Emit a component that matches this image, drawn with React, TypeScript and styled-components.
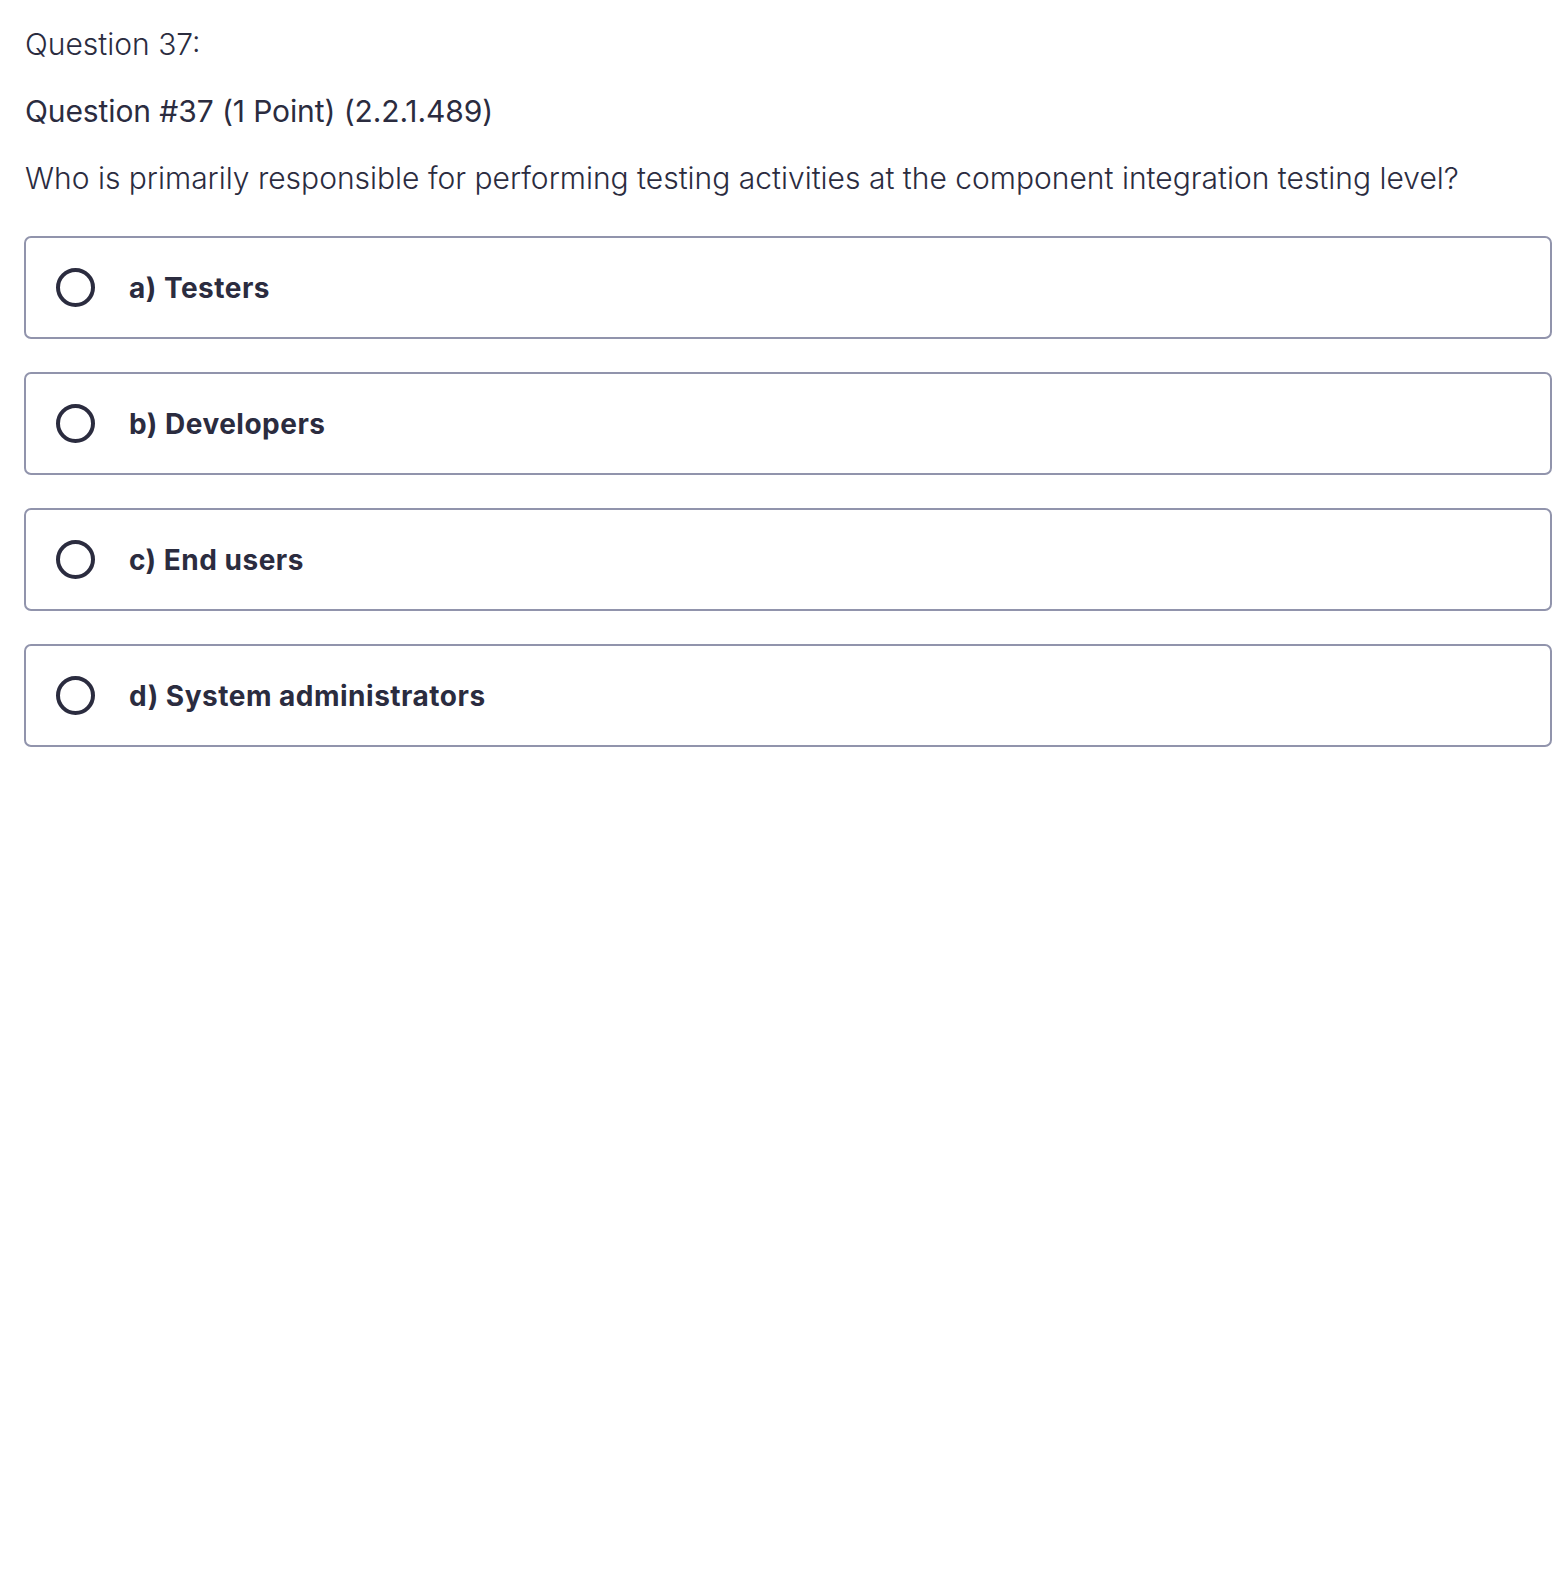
import React from 'react';
import styled, { createGlobalStyle } from 'styled-components';

const OPTIONS = ['a) Testers', 'b) Developers', 'c) End users', 'd) System administrators'];

const GlobalStyle = createGlobalStyle`
  html, body { margin: 0; padding: 0; background: #fff; }
  * { box-sizing: border-box; }
`;

const App = () => {
  return (
    <Page>
      <GlobalStyle />
      <Heading>Question 37:</Heading>
      <SubHeading>Question #37 (1 Point) (2.2.1.489)</SubHeading>
      <Prompt>Who is primarily responsible for performing testing activities at the component integration testing level?</Prompt>
      <OptionList>
        {OPTIONS.map(o => (
          <Option key={o}>
            <Radio />
            <OptionLabel>{o}</OptionLabel>
          </Option>
        ))}
      </OptionList>
    </Page>
  );
};

export default App;

// --- Styled Components ---

const Page = styled.div`
  width: 1568px;
  min-height: 1586px;
  padding: 26px 16px 0 24px;
  color: #2b2c3f;
  font-family: Inter, 'Noto Sans', sans-serif;
`;

const Heading = styled.div`
  font-size: 30px;
  line-height: 36px;
  font-weight: 300;
  margin-left: 1px;
`;

const SubHeading = styled.div`
  font-size: 30px;
  line-height: 36px;
  font-weight: 400;
  letter-spacing: -0.1px;
  margin-top: 31px;
  margin-left: 1px;
`;

const Prompt = styled.div`
  font-size: 30px;
  line-height: 36px;
  font-weight: 300;
  margin-top: 31px;
  margin-left: 1px;
`;

const OptionList = styled.div`
  display: flex;
  flex-direction: column;
  gap: 33px;
  margin-top: 40px;
`;

const Option = styled.label`
  display: flex;
  align-items: center;
  gap: 34px;
  height: 103px;
  padding-left: 30px;
  border: 2px solid #9194ac;
  border-radius: 7px;
  cursor: pointer;
`;

const Radio = styled.span`
  width: 39px;
  height: 39px;
  flex: none;
  border: 4px solid #2b2c3f;
  border-radius: 50%;
`;

const OptionLabel = styled.span`
  font-size: 28px;
  font-weight: 700;
  line-height: 36px;
  letter-spacing: 0.5px;
  margin-top: 1px;
`;
